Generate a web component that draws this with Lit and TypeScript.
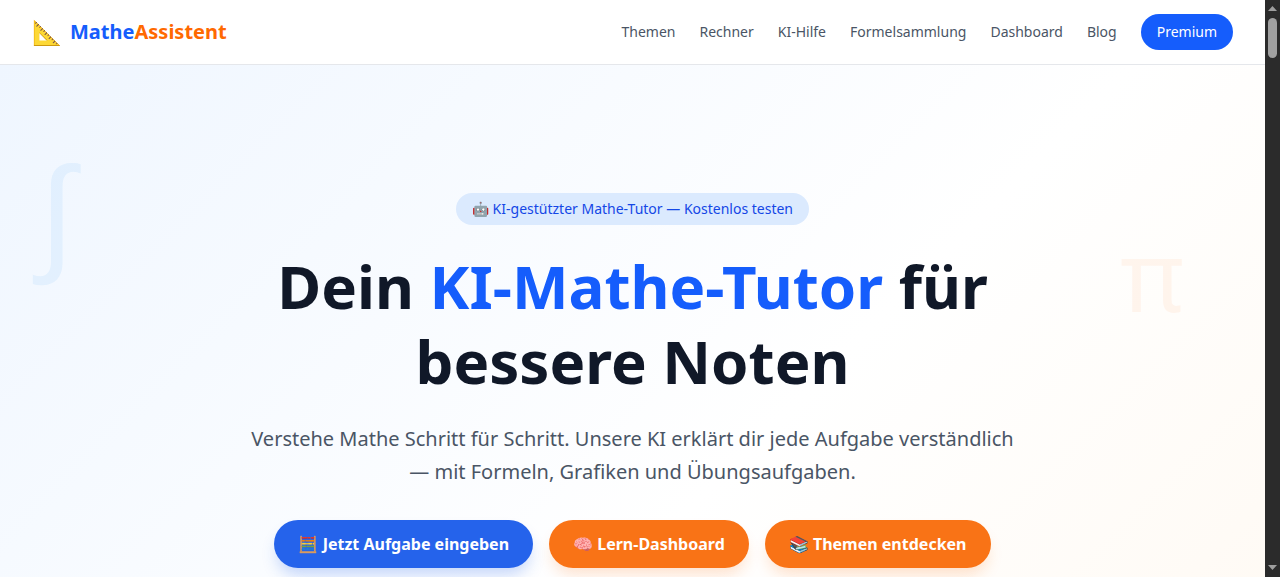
import { LitElement, html, css } from "lit";
import { customElement } from "lit/decorators.js";

@customElement("app-root")
export class AppRoot extends LitElement {
  static styles = css`
    :host {
      display: flex;
      height: 100vh;
      overflow: hidden;
      background: #fff;
      font-family: "Noto Sans", sans-serif;
      color: #101828;
    }
    * { box-sizing: border-box; }
    .page { flex: 1; min-width: 0; }
    .scrollbar {
      flex: 0 0 15px;
      background: #2b2b2b;
      display: flex;
      flex-direction: column;
      align-items: center;
      padding-top: 6px;
    }
    .arrow { display: block; width: 9px; height: 5px; fill: #9e9e9e; }
    .thumb {
      width: 9px;
      height: 40px;
      margin-top: 7px;
      border-radius: 5px;
      background: #a0a0a0;
    }
    .arrow.down { margin-top: auto; margin-bottom: 7px; }
    .nav {
      height: 65px;
      background: #fff;
      border-bottom: 1px solid #e5e7eb;
      display: flex;
      align-items: center;
      justify-content: space-between;
      padding: 0 32px;
    }
    .logo { display: flex; align-items: center; gap: 8px; font-size: 20px; line-height: 28px; font-weight: 700; }
    .logo-mark { font-size: 24px; line-height: 32px; }
    .blue { color: #155dfc; }
    .orange { color: #ff6900; }
    .links { display: flex; align-items: center; gap: 24px; font-size: 14px; line-height: 20px; color: #4a5565; }
    .premium {
      height: 36px;
      display: flex;
      align-items: center;
      padding: 0 16px;
      border-radius: 18px;
      background: #155dfc;
      color: #fff;
    }
    .hero {
      position: relative;
      overflow: hidden;
      height: 1000px;
      padding-top: 128px;
      background: linear-gradient(135deg, #eff6ff 0%, #ffffff 50%, #fff7ed 100%);
      display: flex;
      flex-direction: column;
      align-items: center;
      text-align: center;
    }
    .sym { position: absolute; line-height: 1; }
    .int { left: 39px; top: 79px; font-size: 129px; color: rgba(44, 149, 242, 0.08); }
    .pi { left: 1120px; top: 160px; font-size: 98px; color: rgba(255, 105, 0, 0.06); }
    .badge {
      height: 32px;
      display: flex;
      align-items: center;
      padding: 0 16px;
      border-radius: 16px;
      background: #dbeafe;
      color: #1447e6;
      font-size: 14px;
      line-height: 20px;
    }
    h1 {
      margin: 24px 0 0;
      width: 768px;
      font-size: 60px;
      line-height: 75px;
      font-weight: 700;
      color: #101828;
    }
    .sub {
      margin: 24px 0 0;
      width: 768px;
      font-size: 20px;
      line-height: 32.5px;
      color: #4a5565;
    }
    .actions { display: flex; gap: 16px; margin-top: 32px; }
    .btn {
      height: 48px;
      display: flex;
      align-items: center;
      padding: 0 24px;
      border-radius: 24px;
      color: #fff;
      font-size: 16px;
      line-height: 24px;
      font-weight: 700;
    }
    .btn.primary { background: #2563eb; box-shadow: 0 10px 15px -3px rgba(37, 99, 235, 0.25); }
    .btn.accent { background: #f97316; box-shadow: 0 10px 15px -3px rgba(249, 115, 22, 0.2); }
  `;

  render() {
    return html`
      <div class="page">
        <nav class="nav">
          <div class="logo">
            <span class="logo-mark">📐</span>
            <span><span class="blue">Mathe</span><span class="orange">Assistent</span></span>
          </div>
          <div class="links">
            <span>Themen</span><span>Rechner</span><span>KI-Hilfe</span>
            <span>Formelsammlung</span><span>Dashboard</span><span>Blog</span>
            <span class="premium">Premium</span>
          </div>
        </nav>
        <section class="hero">
          <span class="sym int">∫</span>
          <span class="sym pi">π</span>
          <div class="badge">🤖 KI-gestützter Mathe-Tutor — Kostenlos testen</div>
          <h1>Dein <span class="blue">KI-Mathe-Tutor</span> für bessere Noten</h1>
          <p class="sub">Verstehe Mathe Schritt für Schritt. Unsere KI erklärt dir jede Aufgabe verständlich — mit Formeln, Grafiken und Übungsaufgaben.</p>
          <div class="actions">
            <div class="btn primary">🧮 Jetzt Aufgabe eingeben</div>
            <div class="btn accent">🧠 Lern-Dashboard</div>
            <div class="btn accent">📚 Themen entdecken</div>
          </div>
        </section>
      </div>
      <div class="scrollbar" aria-hidden="true">
        <svg class="arrow" viewBox="0 0 9 5"><path d="M4.5 0 9 5H0z"></path></svg>
        <div class="thumb"></div>
        <svg class="arrow down" viewBox="0 0 9 5"><path d="M0 0h9L4.5 5z"></path></svg>
      </div>
    `;
  }
}
